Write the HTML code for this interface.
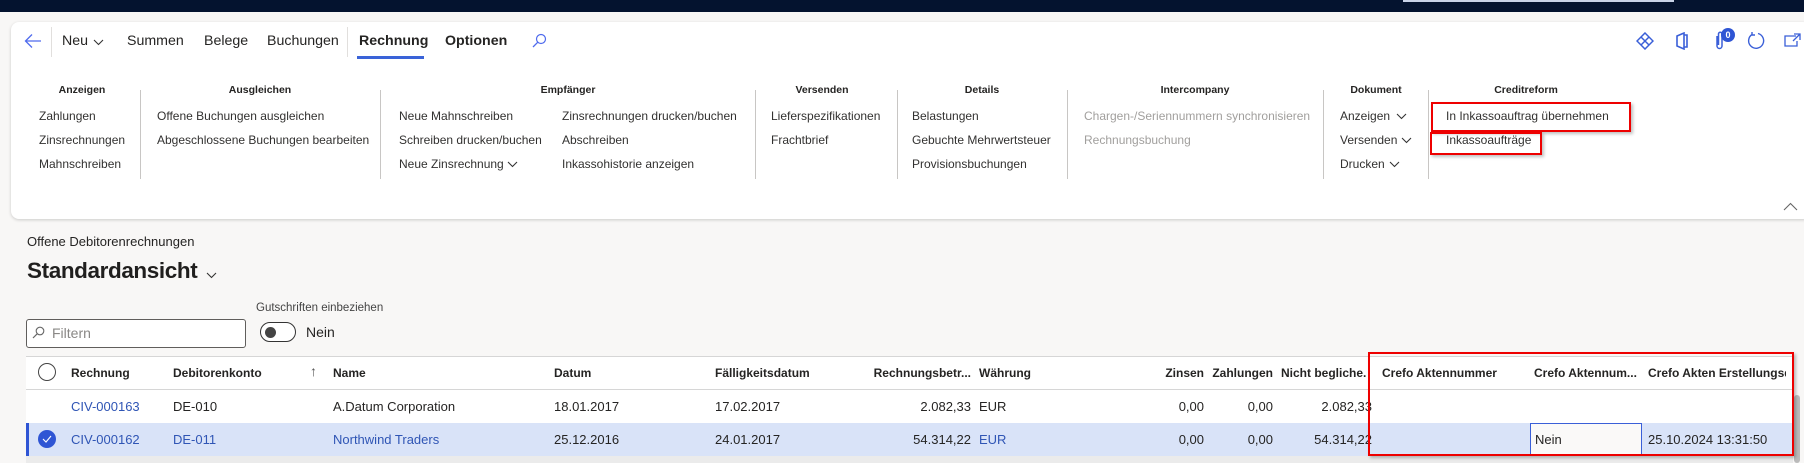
<!DOCTYPE html>
<html><head><meta charset="utf-8"><style>
*{margin:0;padding:0;box-sizing:border-box}
body{width:1804px;height:463px;overflow:hidden;background:#f8f7f6;font-family:"Liberation Sans",sans-serif;color:#222;position:relative}
.a{position:absolute;white-space:nowrap}
.top{left:0;top:0;width:1804px;height:12px;background:#04132f}
.card{left:11px;top:22px;width:1800px;height:197px;background:#fff;border-radius:8px;box-shadow:0 1px 3px rgba(0,0,0,.18)}
.tab{top:33px;font-size:14.2px;color:#252423}
.gh{top:84px;font-size:10.5px;font-weight:bold;color:#252423;transform:translateX(-50%)}
.it{font-size:12px;color:#323130}
.dis{color:#a19f9d}
.dv{width:1px;background:#c8c6c4;top:90px;height:89px}
.red{border:2px solid #e00;box-shadow:2px 2px 3px rgba(0,0,0,.25)}
.th{top:366px;font-size:12px;font-weight:bold;color:#252423}
.td{font-size:13px;color:#252423}
.r1{top:399px}.r2{top:432px}
.lk{color:#2f55b5}
.rt{text-align:right}
</style></head><body>
<div class="a top"></div>
<div class="a" style="left:1403px;top:0;width:271px;height:2px;background:#c9d3e8"></div>
<div class="a card"></div>
<svg class="a" style="left:24px;top:33px" width="18" height="16" viewBox="0 0 18 16"><path d="M17 8H2M8 1.5L1.5 8 8 14.5" fill="none" stroke="#4f6bed" stroke-width="1.3"/></svg>
<div class="a" style="left:51px;top:27px;width:1px;height:30px;background:#e1dfdd"></div>
<div class="a tab" style="left:62px">Neu</div>
<svg class="a" style="left:93px;top:39px" width="11" height="7"><path d="M1 1l4.5 4.5L10 1" fill="none" stroke="#333" stroke-width="1.1"/></svg>
<div class="a tab" style="left:127px">Summen</div>
<div class="a tab" style="left:204px">Belege</div>
<div class="a tab" style="left:267px">Buchungen</div>
<div class="a" style="left:347px;top:27px;width:1px;height:30px;background:#e1dfdd"></div>
<div class="a tab" style="left:359px;font-weight:bold">Rechnung</div>
<div class="a" style="left:357px;top:56px;width:67px;height:3px;background:#3a63d8"></div>
<div class="a tab" style="left:445px;font-weight:bold">Optionen</div>
<svg class="a" style="left:532px;top:33px" width="15" height="15"><circle cx="9" cy="6" r="4.5" fill="none" stroke="#4f6bed" stroke-width="1.2"/><path d="M5.8 9.2L1 14" stroke="#4f6bed" stroke-width="1.3"/></svg>
<svg class="a" style="left:1636px;top:32px" width="18" height="18"><path d="M9 1l8 8-8 8-8-8z M5 5l8 8 M13 5l-8 8" fill="none" stroke="#3a5fd8" stroke-width="1.5"/></svg>
<svg class="a" style="left:1675px;top:32px" width="14" height="18"><path d="M2 4l7-3v16l-7-3z M9 3h3v12h-3" fill="none" stroke="#3a5fd8" stroke-width="1.6"/></svg>
<svg class="a" style="left:1714px;top:30px" width="12" height="20"><path d="M3 6v10a2.5 2.5 0 005 0V4a1.7 1.7 0 00-3.5 0v11" fill="none" stroke="#3a5fd8" stroke-width="1.5"/></svg>
<div class="a" style="left:1721px;top:28px;width:14px;height:14px;border-radius:7px;background:#2f55d4;color:#fff;font-size:9px;font-weight:bold;text-align:center;line-height:14px">0</div>
<svg class="a" style="left:1746px;top:31px" width="19" height="19"><path d="M6 3.5A7.5 7.5 0 1 0 12 2.5 M6 1v3h3" fill="none" stroke="#3a5fd8" stroke-width="1.4"/></svg>
<svg class="a" style="left:1784px;top:33px" width="18" height="14"><path d="M12 3H1v10h12V8 M10 1h6v6 M16 1l-7 7" fill="none" stroke="#3a5fd8" stroke-width="1.3"/></svg>
<div class="a gh" style="left:82px">Anzeigen</div>
<div class="a gh" style="left:260px">Ausgleichen</div>
<div class="a gh" style="left:568px">Empfänger</div>
<div class="a gh" style="left:822px">Versenden</div>
<div class="a gh" style="left:982px">Details</div>
<div class="a gh" style="left:1195px">Intercompany</div>
<div class="a gh" style="left:1376px">Dokument</div>
<div class="a gh" style="left:1526px">Creditreform</div>
<div class="a dv" style="left:140px"></div><div class="a dv" style="left:380px"></div><div class="a dv" style="left:755px"></div><div class="a dv" style="left:897px"></div><div class="a dv" style="left:1067px"></div><div class="a dv" style="left:1323px"></div><div class="a dv" style="left:1428px"></div>
<div class="a it" style="left:39px;top:109px">Zahlungen</div>
<div class="a it" style="left:39px;top:133px">Zinsrechnungen</div>
<div class="a it" style="left:39px;top:157px">Mahnschreiben</div>
<div class="a it" style="left:157px;top:109px">Offene Buchungen ausgleichen</div>
<div class="a it" style="left:157px;top:133px">Abgeschlossene Buchungen bearbeiten</div>
<div class="a it" style="left:399px;top:109px">Neue Mahnschreiben</div>
<div class="a it" style="left:399px;top:133px">Schreiben drucken/buchen</div>
<div class="a it" style="left:399px;top:157px">Neue Zinsrechnung</div>
<svg class="a" style="left:507px;top:161px" width="11" height="7"><path d="M1 1l4.5 4.5L10 1" fill="none" stroke="#333" stroke-width="1.1"/></svg>
<div class="a it" style="left:562px;top:109px">Zinsrechnungen drucken/buchen</div>
<div class="a it" style="left:562px;top:133px">Abschreiben</div>
<div class="a it" style="left:562px;top:157px">Inkassohistorie anzeigen</div>
<div class="a it" style="left:771px;top:109px">Lieferspezifikationen</div>
<div class="a it" style="left:771px;top:133px">Frachtbrief</div>
<div class="a it" style="left:912px;top:109px">Belastungen</div>
<div class="a it" style="left:912px;top:133px">Gebuchte Mehrwertsteuer</div>
<div class="a it" style="left:912px;top:157px">Provisionsbuchungen</div>
<div class="a it dis" style="left:1084px;top:109px">Chargen-/Seriennummern synchronisieren</div>
<div class="a it dis" style="left:1084px;top:133px">Rechnungsbuchung</div>
<div class="a it" style="left:1340px;top:109px">Anzeigen</div>
<div class="a it" style="left:1340px;top:133px">Versenden</div>
<div class="a it" style="left:1340px;top:157px">Drucken</div>
<svg class="a" style="left:1396px;top:113px" width="11" height="7"><path d="M1 1l4.5 4.5L10 1" fill="none" stroke="#333" stroke-width="1.1"/></svg>
<svg class="a" style="left:1401px;top:137px" width="11" height="7"><path d="M1 1l4.5 4.5L10 1" fill="none" stroke="#333" stroke-width="1.1"/></svg>
<svg class="a" style="left:1389px;top:161px" width="11" height="7"><path d="M1 1l4.5 4.5L10 1" fill="none" stroke="#333" stroke-width="1.1"/></svg>
<div class="a it" style="left:1446px;top:109px">In Inkassoauftrag übernehmen</div>
<div class="a it" style="left:1446px;top:133px">Inkassoaufträge</div>
<div class="a red" style="left:1431px;top:102px;width:200px;height:30px"></div>
<div class="a red" style="left:1430px;top:132px;width:112px;height:23px"></div>
<svg class="a" style="left:1783px;top:202px" width="15" height="9"><path d="M1 8l6.5-6.5L14 8" fill="none" stroke="#666" stroke-width="1.1"/></svg>
<div class="a" style="left:27px;top:234px;font-size:13px;color:#252423">Offene Debitorenrechnungen</div>
<div class="a" style="left:27px;top:258px;font-size:22.5px;font-weight:bold;color:#201f1e;letter-spacing:-.4px">Standardansicht</div>
<svg class="a" style="left:206px;top:272px" width="11" height="7"><path d="M1 1l4.5 4.5L10 1" fill="none" stroke="#333" stroke-width="1.1"/></svg>
<div class="a" style="left:256px;top:302px;font-size:11.5px;color:#444">Gutschriften einbeziehen</div>
<div class="a" style="left:26px;top:319px;width:220px;height:29px;border:1px solid #605e5c;border-radius:3px;background:#fff"></div>
<svg class="a" style="left:32px;top:326px" width="13" height="13"><circle cx="8" cy="5" r="3.8" fill="none" stroke="#666" stroke-width="1.1"/><path d="M5.2 7.8L1 12" stroke="#666" stroke-width="1.2"/></svg>
<div class="a" style="left:52px;top:325px;font-size:14px;color:#8a8886">Filtern</div>
<div class="a" style="left:260px;top:322px;width:36px;height:20px;border:1.3px solid #333;border-radius:10px;background:#fff"></div>
<div class="a" style="left:265px;top:327px;width:11px;height:11px;border-radius:6px;background:#444"></div>
<div class="a" style="left:306px;top:324px;font-size:14px;color:#252423">Nein</div>
<div class="a" style="left:26px;top:356px;width:1767px;height:100px;background:#fff;border-top:1px solid #d6d6d6"></div>
<div class="a" style="left:26px;top:389px;width:1767px;height:1px;background:#d6d6d6"></div>
<div class="a" style="left:26px;top:423px;width:1767px;height:33px;background:#d9e3f8"></div>
<div class="a" style="left:26px;top:423px;width:3px;height:33px;background:#2f55d4"></div>
<div class="a" style="left:26px;top:456px;width:1767px;height:7px;background:#ebebeb"></div>
<div class="a" style="left:1794px;top:395px;width:6px;height:68px;background:#bbb;border-radius:3px"></div>
<div class="a" style="left:38px;top:363px;width:18px;height:18px;border:1.3px solid #444;border-radius:50%"></div>
<div class="a" style="left:38px;top:430px;width:18px;height:18px;border-radius:50%;background:#2f55d4"></div>
<svg class="a" style="left:42px;top:435px" width="10" height="8"><path d="M1 4l3 3 5-6" fill="none" stroke="#fff" stroke-width="1.1"/></svg>
<div class="a th" style="left:71px">Rechnung</div>
<div class="a th" style="left:173px">Debitorenkonto</div>
<div class="a" style="left:310px;top:363px;font-size:14px;color:#555">↑</div>
<div class="a th" style="left:333px">Name</div>
<div class="a th" style="left:554px">Datum</div>
<div class="a th" style="left:715px">Fälligkeitsdatum</div>
<div class="a th rt" style="left:851px;width:120px">Rechnungsbetr...</div>
<div class="a th" style="left:979px">Währung</div>
<div class="a th rt" style="left:1104px;width:100px">Zinsen</div>
<div class="a th rt" style="left:1173px;width:100px">Zahlungen</div>
<div class="a th" style="left:1281px;width:86px;overflow:hidden">Nicht begliche...</div>
<div class="a th" style="left:1382px">Crefo Aktennummer</div>
<div class="a th" style="left:1534px">Crefo Aktennum...</div>
<div class="a th" style="left:1648px;width:138px;overflow:hidden">Crefo Akten Erstellungsda</div>
<div class="a td r1 lk" style="left:71px">CIV-000163</div>
<div class="a td r1" style="left:173px">DE-010</div>
<div class="a td r1" style="left:333px">A.Datum Corporation</div>
<div class="a td r1" style="left:554px">18.01.2017</div>
<div class="a td r1" style="left:715px">17.02.2017</div>
<div class="a td r1 rt" style="left:871px;width:100px">2.082,33</div>
<div class="a td r1" style="left:979px">EUR</div>
<div class="a td r1 rt" style="left:1104px;width:100px">0,00</div>
<div class="a td r1 rt" style="left:1173px;width:100px">0,00</div>
<div class="a td r1 rt" style="left:1272px;width:100px">2.082,33</div>
<div class="a td r2 lk" style="left:71px">CIV-000162</div>
<div class="a td r2 lk" style="left:173px">DE-011</div>
<div class="a td r2 lk" style="left:333px">Northwind Traders</div>
<div class="a td r2" style="left:554px">25.12.2016</div>
<div class="a td r2" style="left:715px">24.01.2017</div>
<div class="a td r2 rt" style="left:871px;width:100px">54.314,22</div>
<div class="a td r2 lk" style="left:979px">EUR</div>
<div class="a td r2 rt" style="left:1104px;width:100px">0,00</div>
<div class="a td r2 rt" style="left:1173px;width:100px">0,00</div>
<div class="a td r2 rt" style="left:1272px;width:100px">54.314,22</div>
<div class="a" style="left:1530px;top:423px;width:112px;height:33px;background:#faf9f8;border:1px solid #3a5fd8"></div>
<div class="a td r2" style="left:1535px">Nein</div>
<div class="a td r2" style="left:1648px">25.10.2024 13:31:50</div>
<div class="a red" style="left:1368px;top:352px;width:426px;height:104px"></div>
</body></html>
